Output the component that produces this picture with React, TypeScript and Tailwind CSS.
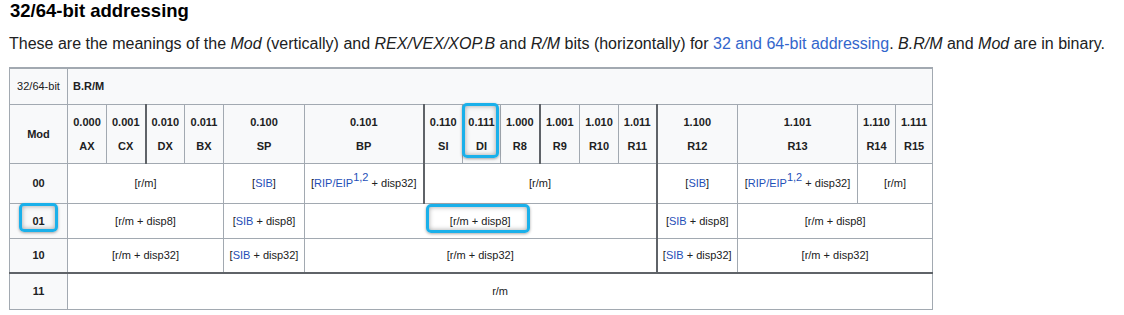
import React from "react";

type Col = { bits: string; reg: string; w: number; dark?: boolean };

const cols: Col[] = [
  { bits: "0.000", reg: "AX", w: 39 },
  { bits: "0.001", reg: "CX", w: 39 },
  { bits: "0.010", reg: "DX", w: 39, dark: true },
  { bits: "0.011", reg: "BX", w: 39 },
  { bits: "0.100", reg: "SP", w: 81 },
  { bits: "0.101", reg: "BP", w: 119 },
  { bits: "0.110", reg: "SI", w: 39, dark: true },
  { bits: "0.111", reg: "DI", w: 38 },
  { bits: "1.000", reg: "R8", w: 39 },
  { bits: "1.001", reg: "R9", w: 40, dark: true },
  { bits: "1.010", reg: "R10", w: 39 },
  { bits: "1.011", reg: "R11", w: 38 },
  { bits: "1.100", reg: "R12", w: 81, dark: true },
  { bits: "1.101", reg: "R13", w: 120 },
  { bits: "1.110", reg: "R14", w: 38 },
  { bits: "1.111", reg: "R15", w: 37 },
];

const cell = "border border-[#a2a9b1] text-center align-middle p-0";
const th = `${cell} bg-[#f8f9fa] font-bold`;
const dark = "border-l-2 border-l-[#5f6368]";

function Link({ children }: { children: React.ReactNode }) {
  return <span className="text-[#1f4fb8]">{children}</span>;
}

function Rip() {
  return (
    <>
      [<Link>RIP/EIP</Link>
      <sup className="relative -top-[6px] text-[11px] text-[#1f4fb8]">1,2</sup> + disp32]
    </>
  );
}

function Highlight({ className }: { className: string }) {
  return (
    <div
      className={`pointer-events-none absolute rounded-[5px] border-[3px] border-[#1ab0ea] shadow-[0_1px_3px_rgba(0,0,0,0.35),inset_0_0_5px_rgba(0,0,0,0.35)] ${className}`}
    />
  );
}

export default function App() {
  return (
    <div className="relative h-[315px] w-[1124px] overflow-hidden bg-white font-['Liberation_Sans',Arial,sans-serif] text-[#202122]">
      <h3 className="pl-[10px] text-[18.5px] font-bold leading-[22px] text-black">32/64-bit addressing</h3>
      <p className="mt-[12px] pl-[9px] text-[16px] leading-[20px]">
        These are the meanings of the <i>Mod</i> (vertically) and <i>REX/VEX/XOP.B</i> and <i>R/M</i> bits
        (horizontally) for <span className="text-[#3366cc]">32 and 64-bit addressing</span>. <i>B.R/M</i> and{" "}
        <i>Mod</i> are in binary.
      </p>

      <table className="ml-[9px] mt-[13px] w-[923px] table-fixed border-collapse border border-t-2 border-[#a2a9b1] text-[11px] leading-[14px]">
        <colgroup>
          <col className="w-[58px]" />
          {cols.map((c) => (
            <col key={c.bits} style={{ width: c.w }} />
          ))}
        </colgroup>
        <tbody>
          <tr className="h-[36px]">
            <th className={`${cell} bg-[#f8f9fa] font-normal`}>32/64-bit</th>
            <th colSpan={16} className={`${th} pl-[5px] text-left`}>
              B.R/M
            </th>
          </tr>
          <tr className="h-[59px]">
            <th className={th}>Mod</th>
            {cols.map((c) => (
              <th key={c.bits} className={`${th} ${c.dark ? dark : ""}`}>
                <div className="leading-[24px]">
                  {c.bits}
                  <br />
                  {c.reg}
                </div>
              </th>
            ))}
          </tr>
          <tr className="h-[40px]">
            <th className={th}>00</th>
            <td colSpan={4} className={cell}>[r/m]</td>
            <td className={cell}>
              [<Link>SIB</Link>]
            </td>
            <td className={cell}>
              <Rip />
            </td>
            <td colSpan={6} className={`${cell} ${dark}`}>[r/m]</td>
            <td className={`${cell} ${dark}`}>
              [<Link>SIB</Link>]
            </td>
            <td className={cell}>
              <Rip />
            </td>
            <td colSpan={2} className={cell}>[r/m]</td>
          </tr>
          {["disp8", "disp32"].map((d, i) => (
            <tr key={d} className="h-[35px]">
              <th className={th}>{i === 0 ? "01" : "10"}</th>
              <td colSpan={4} className={cell}>[r/m + {d}]</td>
              <td className={cell}>
                [<Link>SIB</Link> + {d}]
              </td>
              <td colSpan={7} className={cell}>[r/m + {d}]</td>
              <td className={`${cell} ${dark}`}>
                [<Link>SIB</Link> + {d}]
              </td>
              <td colSpan={3} className={cell}>[r/m + {d}]</td>
            </tr>
          ))}
          <tr className="h-[36px] border-t-2 border-t-[#5f6368]">
            <th className={`${th} border-t-2 border-t-[#5f6368]`}>11</th>
            <td colSpan={16} className={`${cell} border-t-2 border-t-[#5f6368]`}>r/m</td>
          </tr>
        </tbody>
      </table>

      <Highlight className="left-[19px] top-[203px] h-[29px] w-[39px]" />
      <Highlight className="left-[462px] top-[103px] h-[55px] w-[37px]" />
      <Highlight className="left-[426px] top-[204px] h-[29px] w-[104px]" />
    </div>
  );
}
